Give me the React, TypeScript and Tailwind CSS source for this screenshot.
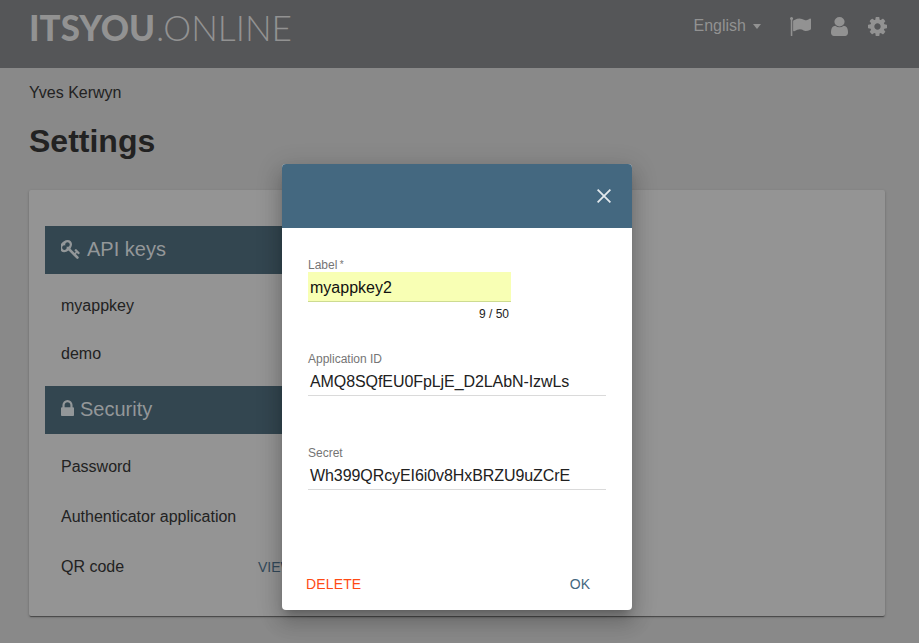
import React from 'react';

const ICONS = {
  flag: 'M320 256q0 72-64 110v1266q0 13-9.5 22.5t-22.5 9.5h-64q-13 0-22.5-9.5t-9.5-22.5v-1266q-64-38-64-110 0-53 37.5-90.5t90.5-37.5 90.5 37.5 37.5 90.5zm1472 64v763q0 25-12.5 38.5t-39.5 27.5q-215 116-369 116-61 0-123.5-22t-108.5-48-115.5-48-142.5-22q-192 0-464 146-17 9-33 9-26 0-45-19t-19-45v-742q0-32 31-55 21-14 79-43 236-120 421-120 107 0 200 29t219 88q38 19 88 19 54 0 117.5-21t110-47 88-47 54.5-21q26 0 45 19t19 45z',
  user: 'M1536 1399q0 109-62.5 187t-150.5 78h-854q-88 0-150.5-78t-62.5-187q0-85 8.5-160.5t31.5-152 58.5-131 94-89 134.5-34.5q131 128 313 128t313-128q76 0 134.5 34.5t94 89 58.5 131 31.5 152 8.5 160.5zm-256-887q0 159-112.5 271.5t-271.5 112.5-271.5-112.5-112.5-271.5 112.5-271.5 271.5-112.5 271.5 112.5 112.5 271.5z',
  cog: 'M1152 896q0-106-75-181t-181-75-181 75-75 181 75 181 181 75 181-75 75-181zm512-109v222q0 12-8 23t-20 13l-185 28q-19 54-39 91 35 50 107 138 10 12 10 25t-9 23q-27 37-99 108t-94 71q-12 0-26-9l-138-108q-44 23-91 38-16 136-29 186-7 28-36 28h-222q-14 0-24.5-8.5t-11.5-21.5l-28-184q-49-16-90-37l-141 107q-10 9-25 9-14 0-25-11-126-114-165-168-7-10-7-23 0-12 8-23 15-21 51-66.5t54-70.5q-27-50-41-99l-183-27q-13-2-21-12.5t-8-23.5v-222q0-12 8-23t19-13l186-28q14-46 39-92-40-57-107-138-10-12-10-24 0-10 9-23 26-36 98.5-107.5t94.5-71.5q13 0 26 10l138 107q44-23 91-38 16-136 29-186 7-28 36-28h222q14 0 24.5 8.5t11.5 21.5l28 184q49 16 90 37l142-107q9-9 24-9 13 0 25 10 129 119 165 170 7 8 7 22 0 12-8 23-15 21-51 66.5t-54 70.5q26 50 41 98l183 28q13 2 21 12.5t8 23.5z',
  lock: 'M640 768h512v-192q0-106-75-181t-181-75-181 75-75 181v192zm832 96v576q0 40-28 68t-68 28h-960q-40 0-68-28t-28-68v-576q0-40 28-68t68-28h32v-192q0-184 132-316t316-132 316 132 132 316v192h32q40 0 68 28t28 68z',
  key: 'M832 512q0-80-56-136t-136-56-136 56-56 136q0 42 19 83-41-19-83-19-80 0-136 56t-56 136 56 136 136 56 136-56 56-136q0-42-19-83 41 19 83 19 80 0 136-56t56-136zm851 704q0 17-49 66t-66 49q-9 0-28.5-16t-36.5-33-38.5-40-24.5-26l-96 96 220 220q28 28 28 68 0 42-39 81t-81 39q-40 0-68-28l-671-671q-176 131-365 131-163 0-265.5-102.5t-102.5-265.5q0-160 95-313t248-248 313-95q163 0 265.5 102.5t102.5 265.5q0 189-131 365l355 355 96-96q-3-3-26-24.5t-40-38.5-33-36.5-16-28.5q0-17 49-66t66-49q13 0 23 10 6 6 46 44.5t82 79.5 86.5 86 73 78 28.5 41z',
};

function Icon({ name, box = '0 0 1792 1792', className }: { name: keyof typeof ICONS; box?: string; className: string }) {
  return (
    <svg viewBox={box} preserveAspectRatio="none" className={`shrink-0 fill-current ${className}`} aria-hidden="true">
      <path d={ICONS[name]} />
    </svg>
  );
}

function Logo() {
  return (
    <svg width="266" height="50" viewBox="0 0 266 50" className="overflow-visible fill-current font-['Lato',sans-serif]" role="img">
      <text x="0" y="40.5" fontSize="36" fontWeight="900" textLength="126" lengthAdjust="spacingAndGlyphs">ITSYOU</text>
      <text x="127" y="40.5" fontSize="36" fontWeight="300" textLength="136" lengthAdjust="spacingAndGlyphs">.ONLINE</text>
    </svg>
  );
}

function TopBar() {
  return (
    <header className="flex h-[68px] items-start justify-between bg-[#555658] pl-[29px] pr-8 text-[#929292]">
      <Logo />
      <div className="flex h-[53px] items-center">
        <span className="pb-[2px] text-base">English</span>
        <span className="mr-[29px] ml-[7px] h-0 w-0 border-x-[4.5px] border-t-[5px] border-x-transparent border-t-current" />
        <Icon name="flag" box="64 128 1728 1536" className="mr-5 h-[19px] w-[21px]" />
        <Icon name="user" box="256 128 1280 1536" className="mr-5 h-[19px] w-[17px]" />
        <Icon name="cog" box="128 128 1536 1536" className="h-[19px] w-[19px]" />
      </div>
    </header>
  );
}

function SectionBar({ children }: { children: React.ReactNode }) {
  return <h3 className="flex h-12 w-[412px] items-center bg-[#334650] px-4 pb-[2px] text-xl text-[#939799]">{children}</h3>;
}

function SettingsPage() {
  return (
    <main className="px-[29px] pt-4 text-[#222222]">
      <p className="h-[18px] text-base leading-[18px]">Yves Kerwyn</p>
      <h1 className="mt-[19px] text-[32px] leading-10 font-bold">Settings</h1>
      <section className="mt-[29px] mr-[5px] h-[426px] rounded-[2px] bg-[#949494] px-4 pt-9 shadow-[0_1px_3px_0_rgba(0,0,0,0.2),0_1px_1px_0_rgba(0,0,0,0.14),0_2px_1px_-1px_rgba(0,0,0,0.3)]">
        <SectionBar>
          <Icon name="key" box="96 128 1600 1600" className="mr-[7px] h-[19px] w-[19px]" />
          API keys
        </SectionBar>
        <ul className="h-28 px-4 pt-2">
          <li className="flex h-12 items-center">myappkey</li>
          <li className="flex h-12 items-center">demo</li>
        </ul>
        <SectionBar>
          <Icon name="lock" box="320 128 1152 1408" className="mr-[6px] mb-[2px] h-4 w-[13px]" />
          Security
        </SectionBar>
        <ul className="px-4 pt-2">
          <li className="flex h-[50px] items-center">Password</li>
          <li className="flex h-[50px] items-center">Authenticator application</li>
          <li className="flex h-[50px] items-center">
            <span className="w-[197px]">QR code</span>
            <button className="text-sm text-[#33495a]">VIEW</button>
          </li>
        </ul>
      </section>
    </main>
  );
}

function Field({ label, value }: { label: string; value: string }) {
  return (
    <label className="block h-[94px]">
      <span className="block h-[14px] text-xs leading-[14px] text-[#757575]">{label}</span>
      <span className="block h-[30px] border-b border-[#dadada] pl-[2px] text-base leading-[31px] tracking-[-0.08px] text-[#212121]">{value}</span>
    </label>
  );
}

function KeyDialog() {
  return (
    <div role="dialog" className="absolute top-[164px] left-[282px] flex h-[446px] w-[350px] flex-col overflow-hidden rounded-[4px] bg-white shadow-[0_7px_8px_-4px_rgba(0,0,0,0.2),0_13px_19px_2px_rgba(0,0,0,0.14),0_5px_24px_4px_rgba(0,0,0,0.12)]">
      <div className="flex h-16 shrink-0 items-center justify-end bg-[#446880] pr-[21px] text-[#e3e9ed]">
        <svg width="14" height="14" viewBox="0 0 14 14" className="stroke-current stroke-[1.8]" aria-label="Close">
          <path d="M.6.6 13.400 13.400M13.400.6.6 13.400" />
        </svg>
      </div>
      <div className="h-[324px] px-[26px] pt-[30px]">
        <div className="h-[94px] w-[203px]">
          <span className="block h-[14px] text-xs leading-[14px] text-[#757575]">Label <span className="-ml-[1px] align-[1px] text-[10px] leading-none">*</span></span>
          <span className="block h-[30px] border-b border-[#cddb91] bg-[#f8ffb4] pl-[2px] text-base leading-[31px] text-[#111111]">myappkey2</span>
          <span className="block pt-[5px] pr-[2px] text-right text-xs leading-[14px] text-[#212121]">9 / 50</span>
        </div>
        <Field label="Application ID" value="AMQ8SQfEU0FpLjE_D2LAbN-IzwLs" />
        <Field label="Secret" value="Wh399QRcyEI6i0v8HxBRZU9uZCrE" />
      </div>
      <div className="flex items-center justify-between pt-[22px] pr-[42px] pl-6 text-sm leading-5">
        <button className="tracking-[0.14px] text-[#ff4a14]">DELETE</button>
        <button className="text-[#446880]">OK</button>
      </div>
    </div>
  );
}

export default function App() {
  return (
    <div className="relative h-[643px] w-[919px] overflow-hidden bg-[#898989] font-['Liberation_Sans',Arial,sans-serif] text-base">
      <TopBar />
      <SettingsPage />
      <KeyDialog />
    </div>
  );
}
